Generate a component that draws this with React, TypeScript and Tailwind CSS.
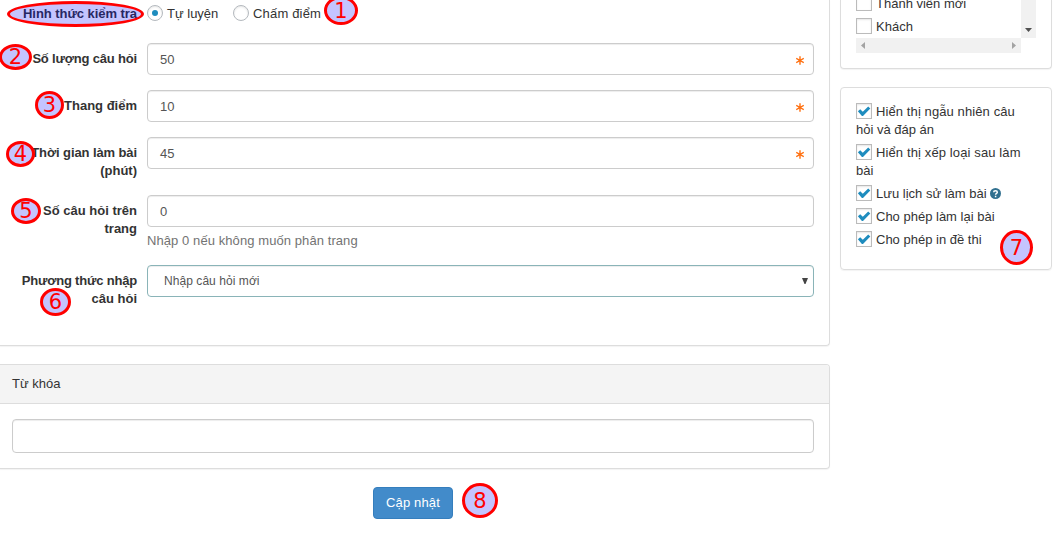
import type { ReactNode } from "react";

const inputClass =
  "flex h-8 w-full items-center rounded-[4px] border border-[#ccc] bg-white px-3 pt-px text-[#555] shadow-[inset_0_1px_1px_rgba(0,0,0,0.075)]";

function Row({ label, className, children }: { label: ReactNode; className: string; children: ReactNode }) {
  return (
    <div className={`flex ${className}`}>
      <div className="w-[147px] shrink-0 pt-[7px] pr-[10px] text-right font-bold whitespace-nowrap text-[#333]">{label}</div>
      <div className="w-[667px]">{children}</div>
    </div>
  );
}

function Asterisk() {
  return (
    <svg width="8" height="9" viewBox="0 0 8 9" className="mt-px -mr-[3px]" stroke="#ff6f0f" strokeWidth="1.4" fill="none">
      <path d="M4 .3V8.7M.2 2.4 7.8 6.6M7.8 2.4.2 6.6" />
    </svg>
  );
}

function RequiredInput({ value }: { value: string }) {
  return (
    <div className={`${inputClass} justify-between`}>
      <span>{value}</span>
      <Asterisk />
    </div>
  );
}

function Radio({ checked }: { checked?: boolean }) {
  return (
    <span className="flex size-4 shrink-0 items-center justify-center rounded-full border border-[#b4b9be] bg-white shadow-[inset_0_1px_2px_rgba(0,0,0,0.1)]">
      {checked && <span className="size-[6px] rounded-full bg-[#1e8cbe]" />}
    </span>
  );
}

function Box({ checked, align = "align-[-2px]" }: { checked?: boolean; align?: string }) {
  return (
    <span
      className={`mr-1 inline-flex size-4 items-center justify-center border border-[#bbb] bg-white shadow-[inset_0_1px_2px_rgba(0,0,0,0.1)] ${align}`}
    >
      {checked && (
        <svg width="14" height="14" viewBox="0 0 14 14" className="shrink-0">
          <path d="M.9 7.3 3.2 5.2 5.8 7.8 11.2 2.4 13.3 4.4 6 11.9 4.9 11.9Z" fill="#1e8cbe" />
        </svg>
      )}
    </span>
  );
}

function Marker({ n, className }: { n?: string; className: string }) {
  return (
    <div
      className={`absolute flex items-center justify-center rounded-[50%] border-[3px] border-[#ff0000] bg-[#0000ff]/[0.23] font-['DejaVu_Sans',sans-serif] text-[21px] leading-[20px] text-[#ff0000] ${className}`}
    >
      {n}
    </div>
  );
}

const options: { text: ReactNode; help?: boolean; className: string }[] = [
  { text: <><span className="tracking-[0.1px]">Hiển thị ngẫu nhiên câu</span><br />hỏi và đáp án</>, className: "h-[41px]" },
  { text: <><span className="tracking-[0.12px]">Hiển thị xếp loại sau làm</span><br />bài</>, className: "h-[41px]" },
  { text: "Lưu lịch sử làm bài", help: true, className: "h-[23px]" },
  { text: "Cho phép làm lại bài", className: "h-[23px]" },
  { text: "Cho phép in đề thi", className: "h-[23px]" },
];

export default function App() {
  return (
    <div className="relative flex h-[539px] w-[1056px] overflow-hidden bg-white font-['Liberation_Sans',Arial,sans-serif] text-[13px] leading-[18px] text-[#333]">
      <main className="w-[830px] shrink-0">
        <section className="h-[346px] rounded-br-[4px] border-r border-b border-[#ddd] shadow-[0_1px_1px_rgba(0,0,0,0.05)]">
          <div className="flex h-[43px]">
            <div className="w-[147px] shrink-0 pt-[5px] pr-[10px] text-right font-bold tracking-[-0.05px]">Hình thức kiểm tra</div>
            <div className="flex h-[26px] items-center">
              <Radio checked />
              <span className="ml-1 w-[66px] pt-px">Tự luyện</span>
              <Radio />
              <span className="ml-1 pt-px tracking-[0.18px]">Chấm điểm</span>
            </div>
          </div>
          <Row label={<span className="tracking-[-0.18px]">Số lượng câu hỏi</span>} className="h-[47px]">
            <RequiredInput value="50" />
          </Row>
          <Row label="Thang điểm" className="h-[47px]">
            <RequiredInput value="10" />
          </Row>
          <Row label={<><span className="tracking-[-0.1px]">Thời gian làm bài</span><br />(phút)</>} className="h-[58px]">
            <RequiredInput value="45" />
          </Row>
          <Row label={<>Số câu hỏi trên<br />trang</>} className="h-[70px]">
            <div className={inputClass}>0</div>
            <p className="mt-[5px] tracking-[0.08px] text-[#737373]">Nhập 0 nếu không muốn phân trang</p>
          </Row>
          <Row label={<><span className="tracking-[-0.19px]">Phương thức nhập</span><br />câu hỏi</>} className="h-[60px]">
            <div className="flex h-8 items-center justify-between rounded-[4px] border border-[#8ab4b8] bg-white pr-[5px] pl-4 text-[12px] text-[#555] shadow-[inset_0_1px_1px_rgba(0,0,0,0.075)]">
              <span className="tracking-[0.06px]">Nhập câu hỏi mới</span>
              <svg width="6" height="6" viewBox="0 0 6 6"><path d="M0 0H6L3.5 6H2.5Z" fill="#444" /></svg>
            </div>
          </Row>
        </section>
        <section className="mt-[18px] h-[105px] rounded-r-[4px] border border-l-0 border-[#ddd] shadow-[0_1px_1px_rgba(0,0,0,0.05)]">
          <header className="h-[39px] rounded-tr-[3px] border-b border-[#ddd] bg-[#f4f4f4] px-3 pt-[10px]">Từ khóa</header>
          <div className="pt-[15px] pl-3">
            <div className="h-[34px] w-[802px] rounded-[4px] border border-[#ccc] shadow-[inset_0_1px_1px_rgba(0,0,0,0.075)]" />
          </div>
        </section>
        <button className="mt-[18px] ml-[373px] flex h-8 w-20 items-center justify-center rounded-[4px] border border-[#357ebd] bg-[#428bca] tracking-[0.15px] text-white">
          Cập nhật
        </button>
      </main>

      <aside className="ml-[10px] w-[212px]">
        <section className="h-[69px] rounded-b-[4px] border border-t-0 border-[#ddd] pl-[15px] shadow-[0_1px_1px_rgba(0,0,0,0.05)]">
          <div className="flex h-[38px] w-[180px] overflow-hidden">
            <div className="-mt-[5px] w-[165px]">
              <div className="h-[23px] whitespace-nowrap"><Box align="align-[-3px]" />Thành viên mới</div>
              <div className="h-[20px] whitespace-nowrap"><Box align="align-[-3px]" />Khách</div>
            </div>
            <div className="flex w-[15px] items-end justify-center bg-[#f1f1f1] pb-[6px]">
              <svg width="7" height="4" viewBox="0 0 7 4"><path d="M0 0H7L3.5 4Z" fill="#505050" /></svg>
            </div>
          </div>
          <div className="flex h-[15px] w-[165px] items-center justify-between bg-[#f1f1f1] px-[5px]">
            <svg width="4" height="7" viewBox="0 0 4 7"><path d="M4 0V7L0 3.5Z" fill="#a3a3a3" /></svg>
            <svg width="4" height="7" viewBox="0 0 4 7"><path d="M0 0V7L4 3.5Z" fill="#a3a3a3" /></svg>
          </div>
        </section>
        <section className="mt-[18px] h-[183px] rounded-[4px] border border-[#ddd] px-[15px] pt-[15px] shadow-[0_1px_1px_rgba(0,0,0,0.05)]">
          {options.map((o, i) => (
            <div key={i} className={`whitespace-nowrap ${o.className}`}>
              <Box checked />
              {o.text}
              {o.help && (
                <svg width="11" height="11" viewBox="0 0 12 12" className="ml-[3px] inline-block align-[-1px]">
                  <circle cx="6" cy="6" r="6" fill="#31708f" />
                  <path d="M4 4.6C4 2.4 8 2.4 8 4.6 8 6 6.1 5.9 6.1 7.4M6.1 8.5V10" fill="none" stroke="white" strokeWidth="1.6" />
                </svg>
              )}
            </div>
          ))}
        </section>
      </aside>

      <Marker className="top-[1px] left-[7px] h-[26px] w-[137px]" />
      <Marker n="1" className="-top-[4px] left-[324px] h-[29px] w-[34px]" />
      <Marker n="2" className="top-[44px] -left-[1px] h-[26px] w-[33px]" />
      <Marker n="3" className="top-[91px] left-[35px] h-[28px] w-[29px]" />
      <Marker n="4" className="top-[141px] left-[6px] h-[26px] w-[29px]" />
      <Marker n="5" className="top-[198px] left-[11px] h-[26px] w-[30px]" />
      <Marker n="6" className="top-[288px] left-[40px] h-[28px] w-[31px]" />
      <Marker n="7" className="top-[230px] left-[1000px] h-[35px] w-[33px]" />
      <Marker n="8" className="top-[483px] left-[462px] h-[35px] w-[36px]" />
    </div>
  );
}
